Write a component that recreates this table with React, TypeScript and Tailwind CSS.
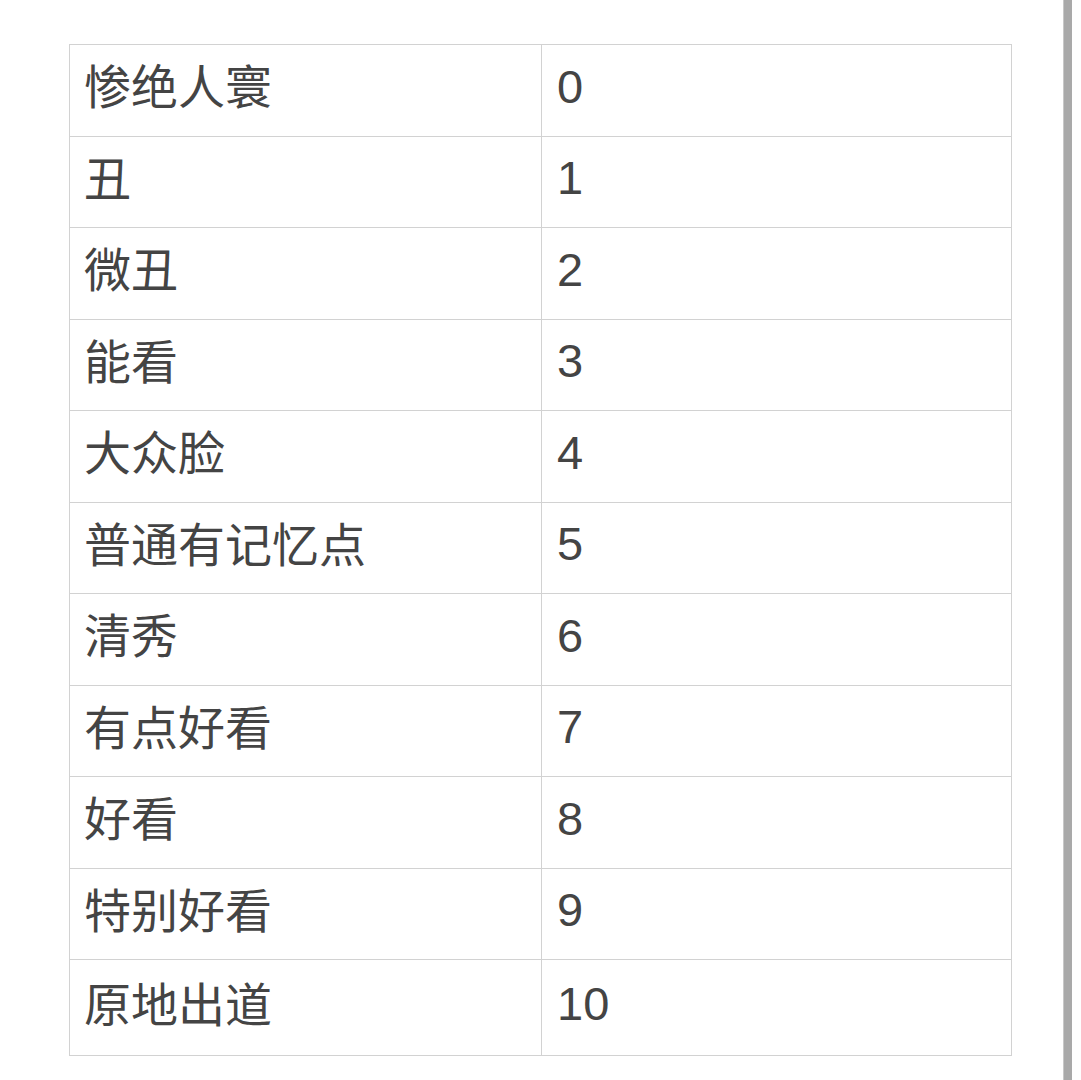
const ROWS: [string, string][] = [
  ['惨绝人寰', '0'],
  ['丑', '1'],
  ['微丑', '2'],
  ['能看', '3'],
  ['大众脸', '4'],
  ['普通有记忆点', '5'],
  ['清秀', '6'],
  ['有点好看', '7'],
  ['好看', '8'],
  ['特别好看', '9'],
  ['原地出道', '10'],
];

export default function App() {
  return (
    <div
      className="relative min-h-[1080px] w-full bg-white pl-[69px] pt-[44px] text-[#444]"
      style={{ fontFamily: '"Liberation Sans", "Noto Sans CJK SC", sans-serif' }}
    >
      <table className="w-[943px] table-fixed border-collapse">
        <tbody>
          {ROWS.map(([label, score], i) => (
            <tr key={label} className={i === ROWS.length - 1 ? 'h-[96px]' : 'h-[91.5px]'}>
              <td className="w-[472px] border border-[#d2d2d2] pb-[5px] pl-[14px] align-middle text-[47px] leading-none">
                {label}
              </td>
              <td className="border border-[#d2d2d2] pb-[8px] pl-[15px] align-middle text-[47px] leading-none">
                {score}
              </td>
            </tr>
          ))}
        </tbody>
      </table>
      {/* scrollbar thumb */}
      <div className="absolute right-[9px] top-0 h-[1080px] w-[9px] border-l border-[#c8c8c8] bg-[#a9a9a9]" />
    </div>
  );
}
